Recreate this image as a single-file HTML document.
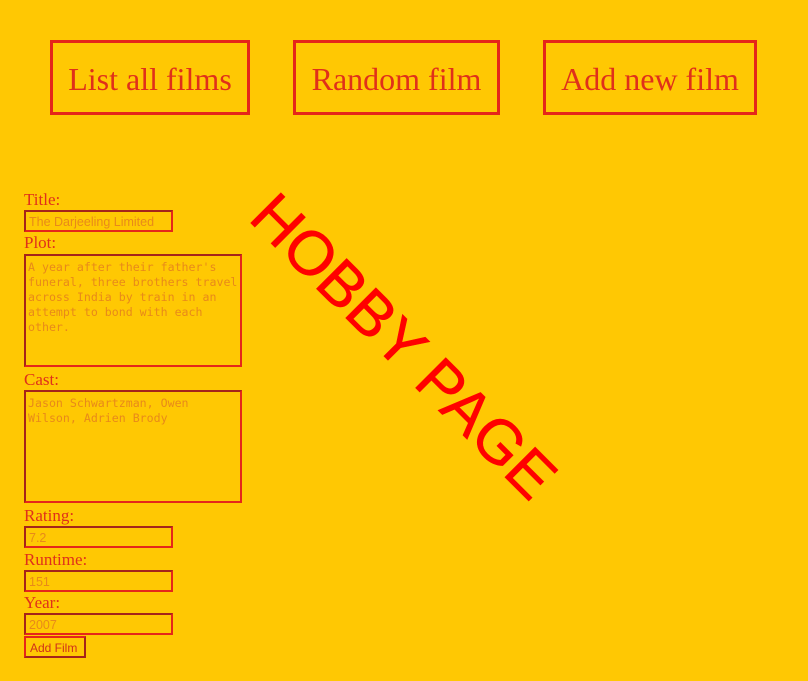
<!DOCTYPE html>
<html><head><style>
body{margin:0;width:808px;height:681px;background:#ffc803;position:relative;overflow:hidden;font-family:"Liberation Serif",serif;color:#e0301a}
.nav{position:absolute;top:40px;height:69px;border:3px solid #e5261a;font-size:32px;line-height:73px;text-align:center;color:#e0301a}
.lbl{position:absolute;left:24px;font-size:17px;line-height:18px}
.in{position:absolute;left:24px;box-sizing:border-box;border:2px solid;border-color:#a5241a #e5261a #e5261a #a5241a;font-family:"Liberation Sans",sans-serif;font-size:12.5px;color:#e8891a;padding:2px 3px;line-height:17px;white-space:nowrap}
.ta{font-family:"DejaVu Sans Mono",monospace;font-size:11.6px;line-height:15px;padding:4px 2px;white-space:pre;letter-spacing:0}
.hp{position:absolute;left:403px;top:347px;transform:translate(-50%,-50%) rotate(45deg);font-family:"Liberation Sans",sans-serif;font-size:62px;color:#ff0000;white-space:nowrap;line-height:1;-webkit-text-stroke:0.6px #ff0000}
</style></head><body>
<div class="nav" style="left:50px;width:194px">List all films</div>
<div class="nav" style="left:293px;width:201px">Random film</div>
<div class="nav" style="left:543px;width:208px">Add new film</div>
<div class="hp">HOBBY PAGE</div>
<div class="lbl" style="top:191px">Title:</div>
<div class="in" style="top:210px;width:149px;height:22px">The Darjeeling Limited</div>
<div class="lbl" style="top:234px">Plot:</div>
<div class="in ta" style="top:254px;width:218px;height:113px">A year after their father's
funeral, three brothers travel
across India by train in an
attempt to bond with each
other.</div>
<div class="lbl" style="top:371px">Cast:</div>
<div class="in ta" style="top:390px;width:218px;height:113px">Jason Schwartzman, Owen
Wilson, Adrien Brody</div>
<div class="lbl" style="top:507px">Rating:</div>
<div class="in" style="top:526px;width:149px;height:22px">7.2</div>
<div class="lbl" style="top:551px">Runtime:</div>
<div class="in" style="top:570px;width:149px;height:22px">151</div>
<div class="lbl" style="top:594px">Year:</div>
<div class="in" style="top:613px;width:149px;height:22px">2007</div>
<div class="in" style="top:636px;width:62px;height:22px;border-color:#e5261a #a5241a #a5241a #e5261a;color:#d0301a;font-size:12px;padding:2px 4px">Add Film</div>
</body></html>
